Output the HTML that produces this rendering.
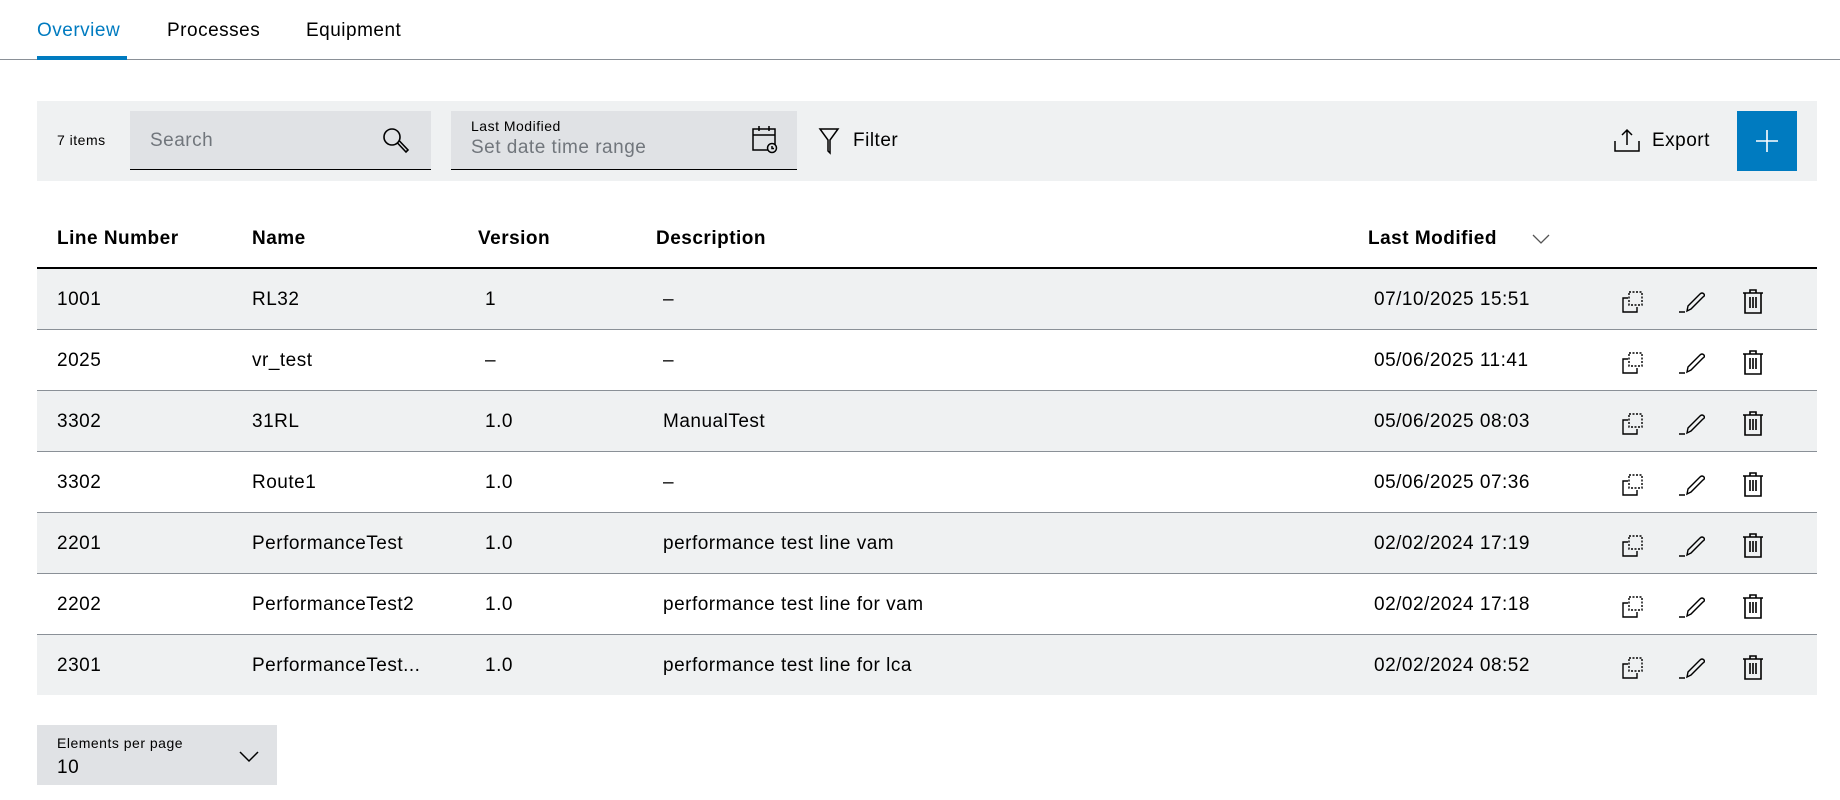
<!DOCTYPE html>
<html><head><meta charset="utf-8"><style>
*{box-sizing:border-box;margin:0;padding:0}
body{width:1840px;height:800px;background:#fff;font-family:"Liberation Sans",sans-serif;color:#000;position:relative;overflow:hidden;letter-spacing:0.5px}
.abs{position:absolute;white-space:nowrap}
.tabs{position:absolute;left:0;top:0;width:1840px;height:60px;border-bottom:1px solid #8a9097}
.tab{position:absolute;top:20px;font-size:19px}
.ul{position:absolute;left:37px;top:56px;width:90px;height:4px;background:#007bc0}
.tb{position:absolute;left:37px;top:101px;width:1780px;height:80px;background:#eff1f2}
.inp{position:absolute;top:10px;height:59px;background:#e0e2e5;border-bottom:1px solid #000}
.hdr{position:absolute;top:228px;font-size:19px;font-weight:bold}
.line{position:absolute;left:37px;width:1780px}
.row{position:absolute;left:37px;width:1780px;height:61px;border-bottom:1px solid #8a9097;font-size:19px}
.row.g{background:#eff1f2}
.row span{position:absolute;top:20px}
.row svg{position:absolute}
</style></head><body>
<div class="tabs">
<div class="tab" style="left:37px;color:#007bc0">Overview</div>
<div class="tab" style="left:167px">Processes</div>
<div class="tab" style="left:306px">Equipment</div>
<div class="ul"></div>
</div>
<div class="tb">
<div class="abs" style="left:20px;top:31px;font-size:14px">7 items</div>
<div class="inp" style="left:93px;width:301px"><div class="abs" style="left:20px;top:19px;font-size:19px;color:#71767c">Search</div>
<svg class="abs" style="left:252px;top:16px" width="28" height="28" viewBox="0 0 28 28" fill="none" stroke="#000" stroke-width="1.6"><circle cx="10" cy="10" r="8"/><path d="M15.5 16 L24 25 L26 23 L17.5 14"/></svg></div>
<div class="inp" style="left:414px;width:346px"><div class="abs" style="left:20px;top:7px;font-size:14px">Last Modified</div><div class="abs" style="left:20px;top:26px;font-size:19px;color:#71767c">Set date time range</div>
<svg class="abs" style="left:300px;top:14px" width="28" height="30" viewBox="0 0 28 30" fill="none" stroke="#000" stroke-width="1.5"><rect x="2" y="4" width="22" height="21"/><path d="M2 10H24M8 1V6M18 1V6"/><circle cx="21" cy="23" r="4.5" fill="#e0e2e5"/><path d="M21 21v2.5h2"/></svg></div>
<svg class="abs" style="left:781px;top:26px" width="22" height="28" viewBox="0 0 22 28" fill="none" stroke="#000" stroke-width="1.5"><path d="M2 2H20L12 13V26L10 24V13Z"/></svg>
<div class="abs" style="left:816px;top:29px;font-size:19px">Filter</div>
<svg class="abs" style="left:1576px;top:26px" width="28" height="26" viewBox="0 0 28 26" fill="none" stroke="#000" stroke-width="1.5"><path d="M2 14V24H26V14M14 18V3M9 8L14 3L19 8"/></svg>
<div class="abs" style="left:1615px;top:29px;font-size:19px">Export</div>
<div class="abs" style="left:1700px;top:10px;width:60px;height:60px;background:#007bc0"><svg style="position:absolute;left:16px;top:16px" width="28" height="28" viewBox="0 0 28 28" stroke="#fff" stroke-width="1.6"><path d="M14 3V25M3 14H25"/></svg></div>
</div>
<div class="hdr" style="left:57px">Line Number</div>
<div class="hdr" style="left:252px">Name</div>
<div class="hdr" style="left:478px">Version</div>
<div class="hdr" style="left:656px">Description</div>
<div class="hdr" style="left:1368px">Last Modified</div>
<svg class="abs" style="left:1532px;top:233px" width="18" height="12" viewBox="0 0 18 12" fill="none" stroke="#555" stroke-width="1.3"><path d="M1 2L9 10L17 2"/></svg>
<div class="line" style="top:267px;height:2px;background:#000"></div>

<div class="abs" style="left:37px;top:725px;width:240px;height:60px;background:#e0e2e5">
<div class="abs" style="left:20px;top:10px;font-size:14px">Elements per page</div>
<div class="abs" style="left:20px;top:32px;font-size:19px">10</div>
<svg class="abs" style="left:202px;top:26px" width="20" height="12" viewBox="0 0 20 12" fill="none" stroke="#000" stroke-width="1.5"><path d="M1 1L10 10L19 1"/></svg>
</div>

<div class="row g" style="top:269px"><span style="left:20px">1001</span><span style="left:215px">RL32</span><span style="left:448px">1</span><span style="left:626px">–</span><span style="left:1337px">07/10/2025 15:51</span>ICONS</div>
<div class="row" style="top:330px"><span style="left:20px">2025</span><span style="left:215px">vr_test</span><span style="left:448px">–</span><span style="left:626px">–</span><span style="left:1337px">05/06/2025 11:41</span>ICONS</div>
<div class="row g" style="top:391px"><span style="left:20px">3302</span><span style="left:215px">31RL</span><span style="left:448px">1.0</span><span style="left:626px">ManualTest</span><span style="left:1337px">05/06/2025 08:03</span>ICONS</div>
<div class="row" style="top:452px"><span style="left:20px">3302</span><span style="left:215px">Route1</span><span style="left:448px">1.0</span><span style="left:626px">–</span><span style="left:1337px">05/06/2025 07:36</span>ICONS</div>
<div class="row g" style="top:513px"><span style="left:20px">2201</span><span style="left:215px">PerformanceTest</span><span style="left:448px">1.0</span><span style="left:626px">performance test line vam</span><span style="left:1337px">02/02/2024 17:19</span>ICONS</div>
<div class="row" style="top:574px"><span style="left:20px">2202</span><span style="left:215px">PerformanceTest2</span><span style="left:448px">1.0</span><span style="left:626px">performance test line for vam</span><span style="left:1337px">02/02/2024 17:18</span>ICONS</div>
<div class="row g" style="top:635px;border-bottom:none;height:60px"><span style="left:20px">2301</span><span style="left:215px">PerformanceTest...</span><span style="left:448px">1.0</span><span style="left:626px">performance test line for lca</span><span style="left:1337px">02/02/2024 08:52</span>ICONS</div>
<script>
var ic='<svg style="left:1585px;top:22px" width="22" height="22" viewBox="0 0 22 22" fill="none" stroke="#000" stroke-width="1.4"><path d="M6 7H1V21H15V16"/><rect x="7" y="1" width="13" height="13" stroke-dasharray="2 1.5"/></svg>'+
'<svg style="left:1642px;top:22px" width="26" height="22" viewBox="0 0 26 22" fill="none" stroke="#000" stroke-width="1.4"><path d="M0 21H6M8 20L9 15L21 3Q23 1 25 3Q26 5 24 6L12 18Z"/></svg>'+
'<svg style="left:1705px;top:19px" width="22" height="26" viewBox="0 0 22 26" fill="none" stroke="#000" stroke-width="1.6"><path d="M1 5H21M8 5V2H14V5M3 5V25H19V5M8 9V20M11 9V20M14 9V20"/></svg>';
document.querySelectorAll('.row').forEach(function(r){r.innerHTML=r.innerHTML.replace('ICONS',ic);});
</script>
</body></html>
